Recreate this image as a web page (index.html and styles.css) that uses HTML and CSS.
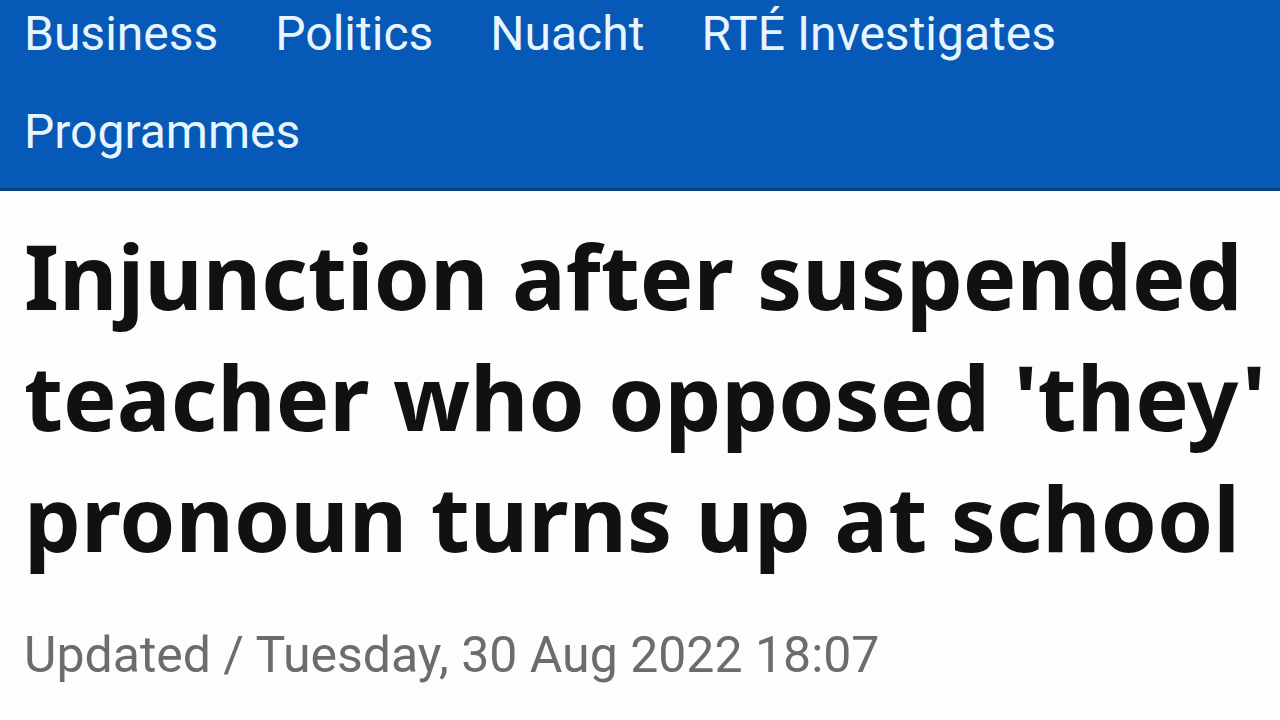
FILE: index.html
```html
<!DOCTYPE html>
<html lang="en">
<head>
<meta charset="utf-8">
<title>RTÉ News</title>
<link rel="stylesheet" href="styles.css">
</head>
<body>
<header class="site-header">
  <nav class="nav">
    <a class="nav-link" href="#">Business</a>
    <a class="nav-link" href="#">Politics</a>
    <a class="nav-link" href="#">Nuacht</a>
    <a class="nav-link" href="#">RTÉ Investigates</a>
    <a class="nav-link" href="#">Programmes</a>
  </nav>
</header>
<main class="article">
  <h1 class="headline"><span class="line">Injunction after suspended</span> <span class="line">teacher who opposed 'they'</span> <span class="line">pronoun turns up at school</span></h1>
  <p class="meta">Updated / Tuesday, 30 Aug 2022 18:07</p>
</main>
</body>
</html>
```
FILE: styles.css
```css
html, body {
  margin: 0;
  padding: 0;
  background: #fdfdfd;
  font-family: Roboto, "Noto Sans", sans-serif;
  overflow: hidden;
}
.site-header {
  background: #0759b8;
  border-bottom: 3px solid #0a3f7d;
  padding: 4px 24px 26px 24px;
}
.nav {
  display: flex;
  flex-wrap: wrap;
  column-gap: 57px;
  row-gap: 38px;
  width: 1100px;
}
.nav-link {
  color: #e8f5ff;
  text-decoration: none;
  font-size: 48px;
  line-height: 60px;
}
.article {
  padding: 0 0 0 24px;
}
.headline {
  margin: 24px 0 0 0;
  font-family: "Noto Sans", Roboto, sans-serif;
  font-size: 90px;
  line-height: 121px;
  font-weight: 700;
  color: #111111;
}
.line {
  display: block;
  white-space: nowrap;
}
.meta {
  margin: 47px 0 0 0;
  font-size: 50px;
  line-height: 60px;
  color: #6c6c6c;
}
```
